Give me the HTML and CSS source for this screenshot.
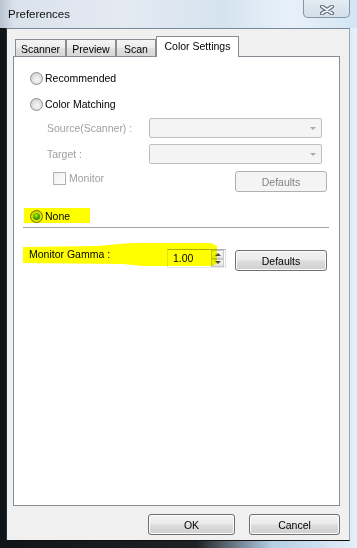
FILE: index.html
```html
<!DOCTYPE html>
<html lang="en">
<head>
    <meta charset="UTF-8">
    <meta name="viewport" content="width=device-width, initial-scale=1.0">
    <title>Preferences</title>
    <link rel="stylesheet" href="styles.css">
</head>
<body>
    <div class="window">
        <div class="titlebar">
            <span class="title">Preferences</span>
            <div class="close-btn">
                <svg width="14" height="10" viewBox="0 0 14 10">
                    <path d="M2 1.5 L12 8.5 M12 1.5 L2 8.5" stroke="#5d6875" stroke-width="4" stroke-linecap="round"/>
                    <path d="M2 1.5 L12 8.5 M12 1.5 L2 8.5" stroke="#f4f7fa" stroke-width="2" stroke-linecap="round"/>
                </svg>
            </div>
        </div>
        <div class="client">
            <div class="tabs">
                <div class="tab tab-scanner">Scanner</div>
                <div class="tab tab-preview">Preview</div>
                <div class="tab tab-scan">Scan</div>
                <div class="tab tab-color active">Color Settings</div>
            </div>
            <div class="panel">
                <div class="radio-row r-recommended"><span class="radio"></span>Recommended</div>
                <div class="radio-row r-matching"><span class="radio"></span>Color Matching</div>
                <div class="field-row r-source">
                    <span class="field-label">Source(Scanner) :</span>
                    <div class="combo"><span class="combo-arrow"></span></div>
                </div>
                <div class="field-row r-target">
                    <span class="field-label">Target :</span>
                    <div class="combo"><span class="combo-arrow"></span></div>
                </div>
                <div class="monitor-row">
                    <span class="checkbox"></span>
                    <span class="check-text">Monitor</span>
                    <button type="button" class="btn btn-defaults" disabled>Defaults</button>
                </div>
                <div class="radio-row r-none">
                    <span class="radio checked"></span>None
                    <span class="hl hl-none"></span>
                </div>
                <div class="sep"></div>
                <div class="gamma-row">
                    <span class="gamma-label">Monitor Gamma :</span>
                    <div class="spin">
                        <span class="spin-value">1.00</span>
                        <div class="spin-btns">
                            <span class="spin-btn"><span class="arrow-up"></span></span>
                            <span class="spin-btn"><span class="arrow-down"></span></span>
                        </div>
                    </div>
                    <button type="button" class="btn btn-defaults">Defaults</button>
                    <span class="hl hl-gamma"></span>
                </div>
            </div>
            <div class="actions">
                <button type="button" class="btn btn-ok">OK</button>
                <button type="button" class="btn btn-cancel">Cancel</button>
            </div>
        </div>
    </div>
</body>
</html>
```

FILE: styles.css
```css
* {
    box-sizing: border-box;
}
body {
    margin: 0;
    font-family: "Liberation Sans", Arial, sans-serif;
    font-size: 10.5px;
    color: #000;
}
.window {
    width: 357px;
    height: 548px;
    display: flex;
    flex-direction: column;
    background: linear-gradient(90deg, #121518 0%, #1e2124 55%, #b3cde3 76%, #e3eff9 100%);
}
.titlebar {
    height: 28px;
    flex: none;
    display: flex;
    align-items: center;
    padding-left: 8px;
    background: linear-gradient(90deg, #b9c3d0 0, #dae2ec 14px, #e4eaf2 35%, #d5e3f0 62%, #e8f1f9 82%, #d2e5f4 100%);
}
.title {
    font-size: 11.5px;
    color: #111;
}
.close-btn {
    margin-left: auto;
    margin-right: 7px;
    align-self: flex-start;
    width: 47px;
    height: 18px;
    border: 1px solid #8694a3;
    border-top: none;
    border-radius: 0 0 5px 5px;
    background: linear-gradient(#e4ebf2, #d3dfea);
    display: flex;
    align-items: center;
    justify-content: center;
    padding-top: 2px;
}
.client {
    flex: 1;
    margin: 0 7px 7px 6px;
    background-color: #f0f0f0;
    border: 1px solid;
    border-color: #7d8a97 #98a6b3 #111 #2a2d30;
    display: flex;
    flex-direction: column;
}
.tabs {
    display: flex;
    align-items: flex-end;
    height: 20px;
    margin-top: 7px;
    padding-left: 8px;
}
.tab {
    height: 17px;
    border: 1px solid #898c95;
    border-bottom: none;
    background: linear-gradient(#f4f4f4 0%, #ececec 45%, #e0e0e0 55%, #d6d6d6 100%);
    display: flex;
    align-items: center;
    justify-content: center;
    padding-top: 1px;
}
.tab-scanner { width: 51px; }
.tab-preview { width: 50px; }
.tab-scan { width: 40px; }
.tab-color { width: 83px; }
.tab.active {
    height: 21px;
    margin-bottom: -1px;
    background: #fff;
    position: relative;
    padding-top: 0;
    padding-bottom: 2px;
}
.panel {
    height: 450px;
    margin: 0 9px 0 6px;
    border: 1px solid #898c95;
    background-color: #fff;
    padding: 0 12px 0 16px;
    display: flex;
    flex-direction: column;
}
.radio-row {
    height: 13px;
    display: flex;
    align-items: center;
    line-height: 13px;
    position: relative;
}
.r-recommended { margin-top: 15px; }
.r-matching { margin-top: 13px; }
.r-none { margin-top: 18px; }
.radio {
    width: 13px;
    height: 13px;
    flex: none;
    margin-right: 2px;
    border-radius: 50%;
    border: 1px solid #8e8f8f;
    background: radial-gradient(circle at 55% 60%, #f7f7f7 0, #e3e3e3 45%, #c6c6c6 100%);
    position: relative;
}
.radio.checked {
    border-color: #6d6d6d;
}
.radio.checked::after {
    content: "";
    position: absolute;
    left: 2px;
    top: 2px;
    width: 7px;
    height: 7px;
    border-radius: 50%;
    background: radial-gradient(circle at 45% 35%, #c8f5b0 0, #4fb548 40%, #1c6a22 100%);
}
.field-row {
    height: 20px;
    display: flex;
    align-items: center;
    padding-left: 17px;
    color: #a0a0a0;
}
.r-source { margin-top: 7px; }
.r-target { margin-top: 6px; }
.field-label {
    width: 102px;
}
.combo {
    width: 173px;
    height: 20px;
    border: 1px solid #bcc0c4;
    border-radius: 2px;
    background: #f4f4f4;
    display: flex;
    align-items: center;
    justify-content: flex-end;
    padding-right: 5px;
}
.combo-arrow {
    width: 0;
    height: 0;
    border-left: 3px solid transparent;
    border-right: 3px solid transparent;
    border-top: 3px solid #a9a9a9;
    margin-top: 1px;
}
.monitor-row {
    height: 21px;
    margin-top: 7px;
    display: flex;
    align-items: flex-start;
    color: #a0a0a0;
}
.checkbox {
    width: 13px;
    height: 13px;
    margin: 1px 3px 0 23px;
    border: 1px solid #b1b1b1;
    background: linear-gradient(135deg, #f0f0f0, #fdfdfd);
}
.check-text {
    line-height: 14px;
}
.btn {
    font: inherit;
    height: 21px;
    padding: 0;
    color: #000;
    border: 1px solid #707070;
    border-radius: 3px;
    background: linear-gradient(#f2f2f2 0%, #ebebeb 48%, #dddddd 52%, #cfcfcf 100%);
    box-shadow: inset 0 0 0 1px #fbfbfb;
}
.btn:disabled {
    color: #838383;
    border-color: #adb2b5;
    background: #f4f4f4;
    box-shadow: none;
}
.btn-defaults {
    width: 92px;
    margin-left: auto;
}
.sep {
    height: 1px;
    margin: 4px -2px 0 -7px;
    background-color: #a0a0a0;
}
.gamma-row {
    height: 21px;
    margin-top: 21px;
    display: flex;
    align-items: flex-start;
    position: relative;
}
.gamma-label {
    width: 138px;
    margin: -1px 0 0 -1px;
    line-height: 13px;
}
.spin {
    width: 59px;
    height: 19px;
    border: 1px solid;
    border-color: #abadb3 #dbdfe6 #e3e9ef #e2e3ea;
    background: #fff;
    display: flex;
    padding: 0 1px 0 5px;
}
.spin-value {
    flex: 1;
    line-height: 17px;
}
.spin-btns {
    width: 13px;
    display: flex;
    flex-direction: column;
}
.spin-btn {
    flex: 1;
    display: flex;
    align-items: center;
    justify-content: center;
    border: 1px solid #c8c8c8;
    background: linear-gradient(#f6f6f6, #e4e4e4);
}
.arrow-up, .arrow-down {
    width: 0;
    height: 0;
    border-left: 3px solid transparent;
    border-right: 3px solid transparent;
}
.arrow-up {
    border-bottom: 3px solid #4a4a4a;
}
.arrow-down {
    border-top: 3px solid #4a4a4a;
}
.gamma-row .btn-defaults {
    margin-top: 1px;
}
.hl {
    position: absolute;
    background-color: #ffff00;
    mix-blend-mode: multiply;
    pointer-events: none;
}
.hl-none {
    left: -6px;
    top: -2px;
    width: 66px;
    height: 15px;
}
.hl-gamma {
    left: -7px;
    top: -6px;
    width: 194px;
    height: 23px;
    clip-path: polygon(0 4px, 75px 3px, 95px 1px, 110px 0, 188px 0, 194px 3px, 194px 20px, 190px 23px, 120px 23px, 100px 21px, 0 20px);
}
.actions {
    display: flex;
    justify-content: flex-end;
    gap: 14px;
    margin-top: 8px;
    padding-right: 9px;
}
.btn-ok {
    width: 87px;
}
.btn-cancel {
    width: 91px;
}
```
